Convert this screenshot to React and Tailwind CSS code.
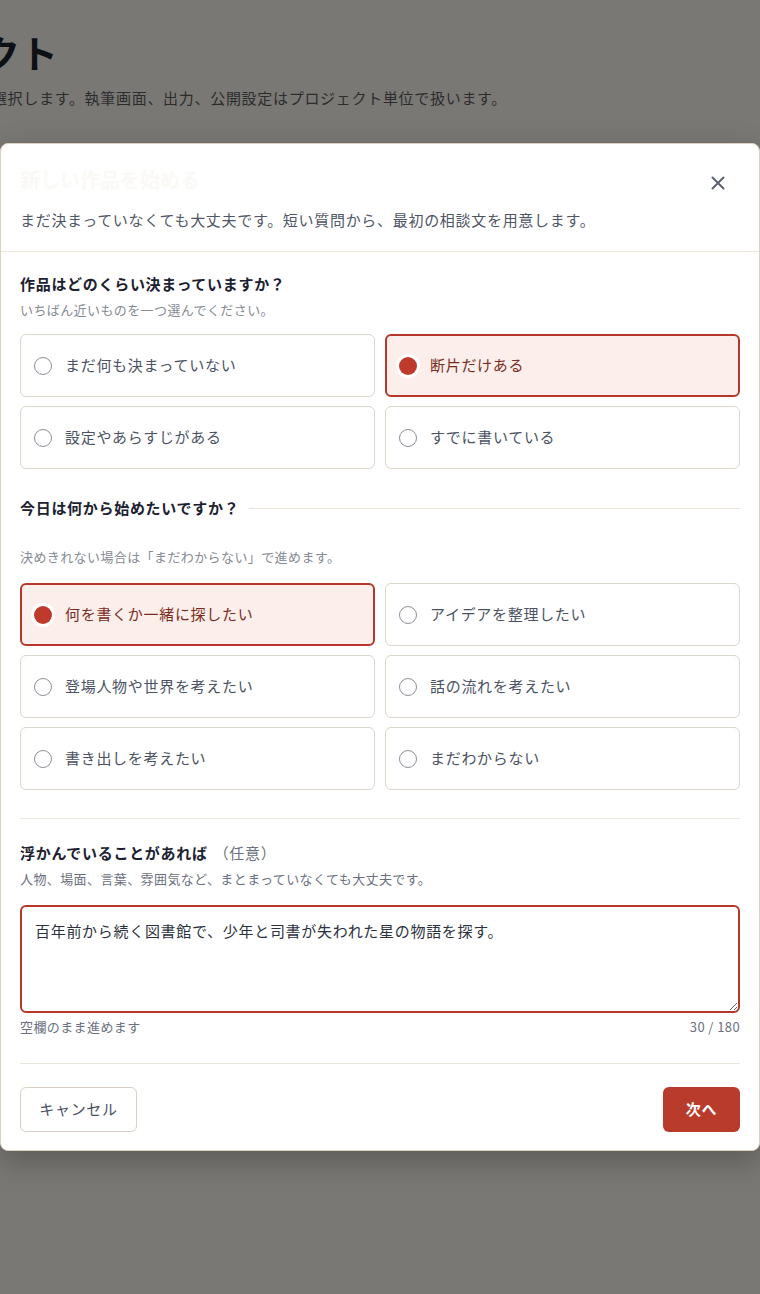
import React from "react";

const FONT = { fontFamily: '"Noto Sans CJK JP", "Noto Sans", sans-serif' };

function Radio({ checked }) {
  if (checked) {
    return (
      <span className="shrink-0 w-[18px] h-[18px] rounded-full bg-[#bf3a2b] shadow-[0_0_0_3px_#ffffff]" />
    );
  }
  return (
    <span className="shrink-0 w-[18px] h-[18px] rounded-full border-[1.5px] border-[#8c9099] bg-white" />
  );
}

function Option({ label, checked }) {
  return (
    <div
      className={
        checked
          ? "h-[63px] flex items-center gap-[13px] px-[12px] rounded-md border-2 border-[#b5382a] bg-[#fcefeb]"
          : "h-[63px] flex items-center gap-[13px] px-[13px] rounded-md border border-[#ddd6ca] bg-white"
      }
    >
      <Radio checked={checked} />
      <span
        className={
          checked
            ? "text-[15px] tracking-[0.7px] text-[#7a2c23]"
            : "text-[15px] tracking-[0.7px] text-[#4b5263]"
        }
      >
        {label}
      </span>
    </div>
  );
}

export default function App() {
  const q1 = [
    ["まだ何も決まっていない", false],
    ["断片だけある", true],
    ["設定やあらすじがある", false],
    ["すでに書いている", false],
  ];
  const q2 = [
    ["何を書くか一緒に探したい", true],
    ["アイデアを整理したい", false],
    ["登場人物や世界を考えたい", false],
    ["話の流れを考えたい", false],
    ["書き出しを考えたい", false],
    ["まだわからない", false],
  ];
  return (
    <div style={FONT} className="min-h-[1294px] w-[760px] bg-[#7a7874] overflow-hidden">
      <div className="pt-[30px]">
        <h1 className="ml-[-170px] text-[38px] leading-[44px] font-bold text-[#0d1015] whitespace-nowrap">
          プロジェクト
        </h1>
        <p className="mt-[12px] ml-[-118px] text-[15px] tracking-[0.7px] leading-[24px] text-[#2b2c2e] whitespace-nowrap">
          プロジェクトを選択します。執筆画面、出力、公開設定はプロジェクト単位で扱います。
        </p>
      </div>

      <div className="mt-[33px] w-[760px] rounded-lg bg-white border border-[#dcd2c2] shadow-[0_10px_30px_rgba(0,0,0,0.25)]">
        <div className="px-[19px] pt-[22px] pb-5 border-b border-[#ebe5da]">
          <div className="flex items-start justify-between">
            <h2 className="text-[20px] leading-[28px] font-bold text-[#fbf9f5]">
              新しい作品を始める
            </h2>
            <button className="mt-[9px] mr-[14px] w-[16px] h-[16px] flex items-center justify-center text-[#5c6271]">
              <svg width="16" height="16" viewBox="0 0 16 16" fill="none" stroke="currentColor" strokeWidth="2" strokeLinecap="round">
                <path d="M2.5 2.5 L13.5 13.5 M13.5 2.5 L2.5 13.5" />
              </svg>
            </button>
          </div>
          <p className="mt-[15px] text-[15px] tracking-[0.7px] leading-[22px] text-[#4f5665]">
            まだ決まっていなくても大丈夫です。短い質問から、最初の相談文を用意します。
          </p>
        </div>

        <div className="px-[19px] pt-[21px]">
          <h3 className="text-[15px] tracking-[0.7px] leading-[22px] font-bold text-[#1b2130]">
            作品はどのくらい決まっていますか？
          </h3>
          <p className="mt-[5px] text-[13px] tracking-[0.4px] leading-[20px] text-[#868b94]">
            いちばん近いものを一つ選んでください。
          </p>
          <div className="mt-[14px] grid grid-cols-2 gap-x-[10px] gap-y-[9px]">
            {q1.map(([l, c]) => (
              <Option key={l} label={l} checked={c} />
            ))}
          </div>

          <div className="mt-[28px] flex items-center gap-[10px]">
            <h3 className="text-[15px] tracking-[0.7px] leading-[22px] font-bold text-[#1b2130] whitespace-nowrap">
              今日は何から始めたいですか？
            </h3>
            <div className="flex-1 h-px bg-[#e8e3d6]" />
          </div>
          <p className="mt-[28px] text-[13px] tracking-[0.4px] leading-[20px] text-[#868b94]">
            決めきれない場合は「まだわからない」で進めます。
          </p>
          <div className="mt-[16px] grid grid-cols-2 gap-x-[10px] gap-y-[9px]">
            {q2.map(([l, c]) => (
              <Option key={l} label={l} checked={c} />
            ))}
          </div>

          <div className="mt-[28px] h-px bg-[#ebe6dc]" />

          <h3 className="mt-[23px] text-[15px] tracking-[0.7px] leading-[22px] font-bold text-[#1b2130]">
            浮かんでいることがあれば
            <span className="ml-[6px] font-normal text-[#6b7180]">（任意）</span>
          </h3>
          <p className="mt-[5px] text-[13px] tracking-[0.4px] leading-[20px] text-[#6b7180]">
            人物、場面、言葉、雰囲気など、まとまっていなくても大丈夫です。
          </p>
          <textarea
            className="mt-[16px] block w-full h-[108px] rounded-md border-2 border-[#b5382a] px-[13px] py-[12px] text-[15px] tracking-[0.7px] leading-[24px] text-[#2b313d] outline-none resize-y"
            style={FONT}
            defaultValue="百年前から続く図書館で、少年と司書が失われた星の物語を探す。"
          />
          <div className="mt-[4px] flex justify-between text-[13px] tracking-[0.4px] leading-[20px] text-[#6b7180]">
            <span>空欄のまま進めます</span>
            <span>30 / 180</span>
          </div>

          <div className="mt-[26px] h-px bg-[#ebe6dc]" />

          <div className="pt-[23px] pb-[18px] flex justify-between">
            <button className="h-[45px] w-[117px] rounded-md border border-[#d8d0c3] bg-white text-[15px] tracking-[0.7px] text-[#4b5263]">
              キャンセル
            </button>
            <button className="h-[45px] w-[77px] rounded-md bg-[#b83b2b] text-[15px] tracking-[0.7px] font-bold text-white">
              次へ
            </button>
          </div>
        </div>
      </div>
    </div>
  );
}
